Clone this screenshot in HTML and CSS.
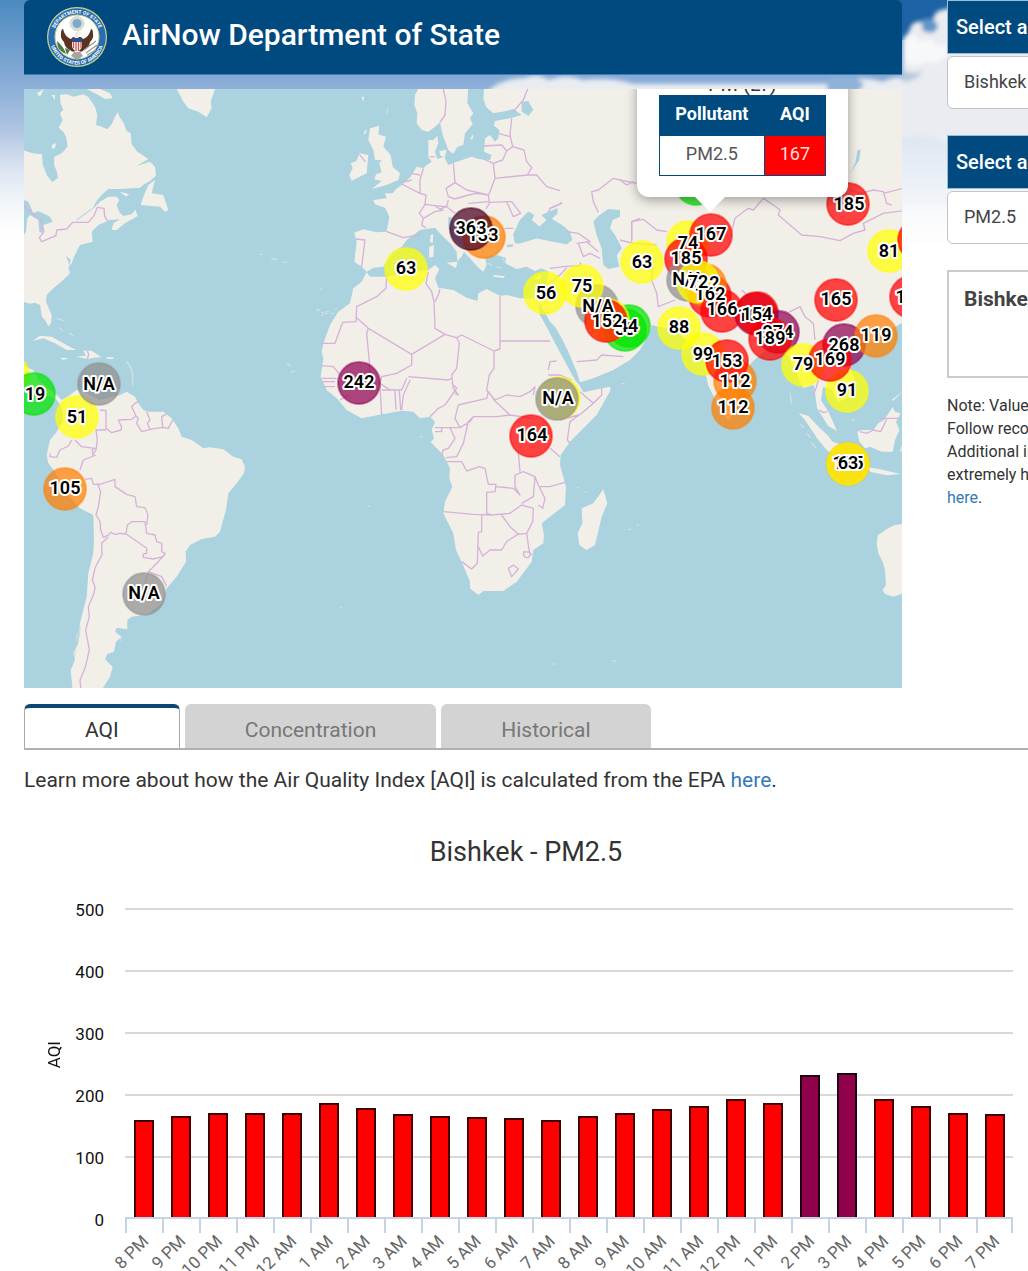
FILE: index.html
```html
<!DOCTYPE html>
<html lang="en">
<head>
<meta charset="utf-8">
<meta name="viewport" content="width=device-width, initial-scale=1">
<title>AirNow Department of State</title>
<link rel="stylesheet" href="styles.css">
</head>
<body>
<div class="page">
  <svg class="sky" viewBox="0 0 1028 260" preserveAspectRatio="none" aria-hidden="true">
    <defs>
      <linearGradient id="skyFill" x1="0" y1="0" x2="0" y2="1">
        <stop offset="0" stop-color="#4a8ac0"/>
        <stop offset=".3" stop-color="#86aad6"/>
        <stop offset=".55" stop-color="#b9cbe4"/>
        <stop offset="1" stop-color="#ffffff"/>
      </linearGradient>
      <linearGradient id="skyFade" x1="0" y1="0" x2="0" y2="1">
        <stop offset=".5" stop-color="#ffffff" stop-opacity="0"/>
        <stop offset=".95" stop-color="#ffffff"/>
      </linearGradient>
      <filter id="soft" x="-10%" y="-10%" width="120%" height="120%"><feGaussianBlur stdDeviation="2"/></filter>
    </defs>
    <rect width="1028" height="260" fill="url(#skyFill)"/>
    <path d="M880 0h148v40H880z" fill="#1d62a4"/>
    <g filter="url(#soft)">
      <path d="M485 94q15-16 40-16q12-6 24 2q16-7 34 0q30-3 50 4h190q40-10 60-2q10-6 20-4V38q6-4 8-12q6-8 14-2q4 6 8-2q0-10 8-12q8-2 12-2q6-8 14-8h120v260H485z" fill="#e9ecf0"/>
      <path d="M922 20q6-4 14 2q4 6-2 10q-10 2-12-4z" fill="#5f97c8"/>
      <path d="M904 40q10-12 16 2q10-8 18 4q8-4 12 6q-10 14-24 10q-12 8-22-2z" fill="#f7f8f9"/>
      <path d="M902 70q14 6 20 0q-2 10-20 12z" fill="#b9c8dc"/>
      <path d="M826 82q10-8 20-4q10-2 18 6l-6 8h-30z" fill="#8fb2d8"/>
      <path d="M895 140q30-10 60 6v60h-60z" fill="#dce5f1"/>
    </g>
    <rect width="1028" height="260" fill="url(#skyFade)"/>
  </svg>

  <div class="top">
    <main class="lead">
      <header class="banner">
        <svg class="seal" viewBox="0 0 62 62" role="img" aria-label="Department of State seal">
          <defs>
            <path id="arcTop" d="M7.500 31a23.500 23.500 0 0 1 47 0"/>
            <path id="arcBottom" d="M3.500 31a27.500 27.500 0 0 0 55 0"/>
          </defs>
          <circle cx="31" cy="31" r="30" fill="#c9d68a"/>
          <circle cx="31" cy="31" r="28.800" fill="#2a6cb4"/>
          <circle cx="31" cy="31" r="22" fill="#fff" stroke="#c9d68a"/>
          <g class="seal-text">
            <text><textPath href="#arcTop" startOffset="50%">DEPARTMENT OF STATE</textPath></text>
            <text><textPath href="#arcBottom" startOffset="50%">UNITED STATES OF AMERICA</textPath></text>
          </g>
          <circle cx="31" cy="17.500" r="7" fill="#cfe0ea" stroke="#e4cf7c" stroke-dasharray="2 1"/>
          <circle cx="31" cy="17.500" r="4.500" fill="#7fa8c9"/>
          <path d="M17 23q-2 0-2 5q-1 4 3 8q1 6 6 8q3 3 5 1l1-8h2l1 8q2 2 5-1q5-2 6-8q4-4 3-8q0-5-2-5q-2 8-8 10l-2-2h-8l-2 2q-6-2-8-10z" fill="#5b3320"/>
          <path d="M29 29q0-4 3-4q3 1 3 3l-3 1l1 5h-5z" fill="#f1ede0"/>
          <path d="M26 32h10v9q-2 4-5 5q-3-1-5-5z" fill="#f3f1f1"/>
          <path d="M26 32h10v4H26z" fill="#2c4e91"/>
          <path d="M27.500 36v6M30 36v9M32.500 36v9M35 36v6" stroke="#d0524c" stroke-width="1.200"/>
          <path d="M28 46h6l3 4l-6 4l-6-4z" fill="#a9a39d"/>
          <path d="M11 35q7 6 9 13q-9-3-9-13zM19 42l5 2l-3 5z" fill="#4c7b45"/>
          <path d="M38 44l12-9M40 47l11-8M41 49l9-5" stroke="#9b9c96" stroke-width="1.300"/>
        </svg>
        <h1>AirNow Department of State</h1>
      </header>

      <section class="map" aria-label="Air quality map">
        <svg class="map-art" viewBox="24 89 878 599">
          <rect class="sea" x="24" y="89" width="878" height="599"/>

          <!-- North America and the Caribbean -->
          <g transform="translate(20 85) scale(.33333)">
            <path class="land" d="M0 193L38 205L66 208L68 240L76 255L82 272L97 292L114 278L110 258L102 240L103 215L125 205L143 185L139 158L130 140L116 128L128 105L120 85L130 75L122 55L120 30L140 27L160 35L190 28L205 36L225 65L232 90L228 120L245 125L262 133L275 118L285 95L293 82L300 98L310 112L320 138L332 145L335 178L352 200L385 222L350 243L390 230L405 245L408 272L390 288L372 298L360 308L300 312L265 312L245 330L228 350L215 375L240 350L265 335L290 335L298 345L290 360L298 382L310 393L335 388L346 374L353 393L315 415L290 435L275 435L280 415L300 403L270 405L235 420L215 440L218 470L200 475L180 480L162 515L155 535L145 548L150 565L130 585L100 610L80 630L78 650L95 690L93 715L85 724L75 705L66 695L60 660L45 653L30 656L0 648z"/>
            <path class="land" d="M405 285L395 325L430 330L445 375L436 381L420 365L362 360L372 330L385 300zM470 12L490 50L505 70L535 80L560 97L575 70L572 50L585 12zM200 12L235 30L255 42L278 40L270 25L240 12zM50 25L72 12L60 35zM95 30h10v16zM95 180l14-6l-4 14l-8 5zM300 320l28 8l-10 7zM38 768L60 752L95 755L130 775L168 795L140 795L105 775L70 760zM190 797L215 797L245 817L222 818L205 822L168 815L198 812zM120 818L145 820L130 826zM260 817h20v5h-20z"/>
            <path class="water" d="M0 340L25 350L40 385L55 378L90 395L98 410L70 420L68 445L58 440L55 405L30 390L22 400L18 440L0 470z"/>
            <path class="water" d="M138 512l14 12l-4 20l-3-14zM68 240l8 14l10-10l-3 18l10 15l-12-6z"/>
            <path class="line" d="M0 355L30 378L62 405L72 440L58 458L65 470L108 452L110 435L140 432L158 412L205 412L222 392L232 367L252 370L254 395L265 410M202 798l4 10l-4 14"/>
            <path class="line pale" d="M170 405L215 372"/>
            <path class="speck" d="M112 700l20 8M120 730l8 8M150 745l10 8M720 508h6M755 522h16M790 532h8M900 613h6M890 675h8M905 682h5M915 685h6M935 685h6M945 672h5M320 830l12 16l6 20M800 835l10 8M812 862l12-4"/>
          </g>

          <!-- South America -->
          <g transform="translate(20 340) scale(.33333)">
            <path class="land" d="M0 75L40 90L55 120L110 165L125 180L150 165L170 150L190 155L240 180L300 165L320 155L345 170L355 190L370 210L385 215L430 215L455 235L475 265L485 290L515 300L550 325L570 322L610 328L640 350L665 358L675 380L672 400L650 430L625 460L618 510L608 545L600 575L585 590L545 597L510 615L497 635L498 665L470 710L440 745L425 790L380 825L335 830L322 840L322 868L290 863L285 875L305 890L288 905L282 935L262 942L255 958L278 980L270 1010L245 1050L158 1050L152 990L165 960L160 940L175 910L180 850L190 810L200 770L205 700L220 640L222 600L220 525L180 505L130 450L105 395L85 370L80 345L90 300L110 275L130 240L125 200L108 178L50 150L0 140z"/>
            <path class="line" d="M265 590L245 610L246 645L232 670L225 685L217 720L225 740L222 760L205 800L208 830L197 870L208 930L195 985L180 1020L183 1050M232 430L242 455L235 500L228 525L240 545L242 570L250 592L265 585L272 577L285 583L300 580L318 582L322 555L335 545L375 545L380 580L405 585L410 605L425 610L425 635L435 640L430 650L400 657L370 652L370 642L380 640L380 625L345 600L318 582M195 418L215 415L220 433L240 433L285 418L285 440L320 463L345 470L350 500L375 503L384 525L380 555M430 648L415 665L385 695L375 730M385 695L425 710L440 738"/>
            <path class="line" d="M240 210L258 212L258 265L275 278L303 270L305 262L295 240L335 238L348 228L335 200L345 190L355 185M345 225L355 235L350 250L365 275L405 265L430 262L445 265L458 240M380 215L390 240L382 250L390 268M440 222L425 230L428 262M258 270L228 270L232 300L228 330L218 345L217 330L225 325L185 320L165 300M155 300L145 318L120 330L110 352L90 350L90 340M228 345L190 360L180 390"/>
            <path class="speck" d="M172 880l-3 22M166 930l-2 20M180 860l-2 30M300 895l3 6M325 70l12 25l2 40"/>
          </g>

          <!-- Europe, Africa and Arabia -->
          <g transform="translate(320 85) scale(.33333)">
            <path class="land" d="M300 0L285 30L283 60L292 85L290 115L305 135L325 140L345 125L360 112L368 150L385 195L400 207L412 185L430 180L435 145L458 118L450 100L460 85L442 55L445 0z"/>
            <path class="land" d="M493 0L490 40L498 65L520 85L560 78L580 72L605 90L570 100L525 108L522 122L538 135L535 160L525 170L510 150L495 160L492 200L515 210L510 225L475 222L455 215L410 230L385 240L372 215L352 222L345 200L355 175L352 152L340 165L325 165L325 215L335 230L320 240L310 250L290 245L272 275L245 300L228 312L218 325L195 325L200 340L160 345L165 358L195 368L208 395L200 440L170 442L130 433L103 443L110 470L103 530L125 545L140 560L160 548L190 545L220 500L245 485L260 465L300 435L345 428L360 445L395 480L410 500L412 528L425 515L432 500L450 520L475 548L490 560L500 540L495 520L530 510L558 518L556 535L570 542L590 552L620 545L645 558L665 550L685 560L680 600L675 620L665 665L690 710L705 725L725 760L745 800L770 860L780 892L820 880L880 855L930 825L960 795L990 740L1000 700L1100 700L1100 0z"/>
            <path class="land" d="M675 625L650 640L600 640L560 630L540 632L500 612L475 625L472 648L440 638L400 615L355 608L345 580L358 552L345 540L325 555L250 565L200 575L150 575L140 562L125 590L100 610L90 655L55 680L30 720L12 770L5 800L10 820L2 875L20 915L50 940L80 975L125 1000L175 990L245 977L280 980L300 1000L330 995L345 1010L335 1035L342 1060L332 1072L370 1110L390 1150L388 1180L397 1205L375 1250L370 1285L400 1345L408 1395L425 1430L450 1490L450 1510L475 1530L490 1518L550 1518L590 1490L635 1430L640 1395L670 1375L672 1350L665 1315L735 1260L738 1205L720 1140L722 1110L750 1070L830 990L872 915L870 905L790 922L778 900L765 885L735 830L700 765L685 735L660 690L655 662L670 655z"/>
            <path class="land" d="M850 1213L862 1255L845 1295L825 1380L800 1395L778 1380L773 1345L787 1315L785 1270L820 1255z"/>
            <path class="land" d="M150 130L178 122L175 148L198 155L190 185L212 210L218 245L240 265L235 285L200 300L155 312L185 288L163 283L168 268L185 262L178 235L185 225L165 225L160 195L145 165zM118 205L145 210L140 265L95 287L88 270L98 250L92 235L110 228zM332 450L340 448L338 475L330 470zM327 487L342 480L340 515L328 518zM380 533L412 530L408 550zM520 570l35 4l-4 5l-30-4zM638 582l28-16l-8 18zM358 198l22-4l-6 24l-14-8zM450 165l8-18l2 12zM124 35h8l-2 16zM130 150l6-18l4 10z"/>
            <path class="water" d="M580 448L600 405L625 380L642 390L635 405L658 425L680 405L665 390L712 370L712 385L695 402L725 420L750 440L757 465L740 478L690 468L650 460L600 475L585 475z"/>
            <path class="water" d="M820 410L835 393L865 372L900 375L900 395L878 405L870 430L885 450L905 490L890 510L897 545L865 552L850 540L845 490L830 450zM605 50L625 48L640 75L625 92L605 80zM560 480l20-3l-2 8l-16 2z"/>
            <path class="water" d="M385 395L400 400L402 440L445 480L450 500L432 490L400 460L385 430z"/>
            <path class="line" d="M370 12L378 50L375 90L360 112M623 12L610 45L580 80M575 100L570 150L578 185M535 145L570 155M490 183L545 180L560 198L578 185L612 195L620 230L635 248L622 270M560 198L548 225L520 235L490 222M520 235L525 280L622 270L650 270L680 305L730 320L725 355L690 370L682 390M525 280L510 320L505 330L440 315L405 293L400 235M405 293L378 310L385 335L405 342L445 330L470 325L505 330L508 350L445 355M310 250L300 285L300 325L318 330L315 358L345 362L380 365L385 345M245 297L300 325M245 292L275 285M300 270L275 265M315 358L298 385L310 400L345 380L370 375M310 400L305 420L318 430M200 440L250 458L300 450M108 462L135 465L125 545M510 352L560 350L580 395L602 385L575 350L560 350M510 352L498 372M555 430L580 430M345 362L360 372L380 365L405 385M740 440L775 445L810 470L770 475M775 475L790 515L810 505L840 520M800 470L835 500M690 550L730 545L780 542L785 515M680 600L720 570L740 548M950 295L900 285L880 280L835 315L815 320L820 350L835 382M935 470L935 410L960 400M330 215h14M118 208l18 22"/>
            <path class="line" d="M200 575L198 610L170 635L110 665L108 710L68 712L45 775L5 775M110 698L145 730L275 808L375 748L345 730L342 650L335 620L318 595L325 560M345 650L355 630L360 612M375 748L410 758L425 750L522 798L540 792L540 632M540 768L690 768M522 798L522 850L508 870L500 915L525 945M410 758L418 775L410 850L395 870L400 910L415 930L405 925M275 808L275 840L230 865L185 875L180 895L210 915M145 730L140 745L155 905M5 842L40 845L60 870M5 880h45M5 890h40M10 905L45 905M60 945L85 930M180 900L185 990M265 875L385 885L395 880M185 915L245 915L260 880M225 918L228 975M238 915L242 975M245 975L250 930L270 885M395 895L410 910L375 960L355 970L330 995M415 960L405 1000L420 1028L450 1010L460 995L530 995L570 990L525 948L505 920L500 940L415 960M345 1028L420 1028M345 1040h20v-12M390 1028L405 1060L385 1090L370 1095L365 1110M378 1118L410 1115L430 1075L445 1010L460 995M380 1130L425 1130L440 1158L478 1145L495 1150L505 1198L528 1198L525 1220L500 1222L500 1285L515 1290M370 1280L460 1288L515 1290L570 1285L605 1260L640 1270L638 1310L620 1345L595 1348L570 1325L545 1290M528 1205L580 1210L600 1230L585 1205L585 1170L610 1160L645 1175L640 1235L605 1255M485 1290L485 1340L475 1342L472 1435L455 1452L425 1430M475 1385L488 1413L510 1395L545 1395L560 1370L598 1345M620 1345L628 1400L635 1410M612 1400a10 12 0 1 0 18 2zM565 1450L580 1440L595 1452L575 1475zM600 1160L595 1100M690 1090L720 1115M660 1205L690 1205L735 1192M645 1175L655 1200L675 1240L668 1270L655 1260M525 945L560 930L600 935L630 920L645 905L640 930M570 990L640 1000M685 855L690 830L710 828M685 870L720 870L755 885M780 920L820 955L785 985L750 1010L742 1065L750 1075M820 955L845 930L845 910M770 830L830 825L845 810L910 815M660 690L690 680M720 1005L775 990"/>
            <path class="speck" d="M5 690h5M20 680h6M145 1263h3M300 1055h6M905 896h8M772 1207h4M795 1220h4M925 1333h8M952 1320h4M60 1567h5M700 1737h5M880 1728h6M485 490l8 10M505 535l10 5M530 545l12 4M548 520l6 8M200 85l4-14"/>
          </g>

          <!-- Asia and Oceania -->
          <path class="land" d="M560 89H902V323L885 332L870 342L855 341L843 350L850 368L856 383L850 397L838 402L832 390L823 387L821 400L829 413L837 431L828 426L817 408L814 385L803 388L794 368L785 350L768 348L752 362L738 383L736 410L728 421L718 405L708 385L702 355L688 342L676 330L655 326L632 318L612 300L603 270L580 262L560 230L580 228L600 238L603 262L620 268L626 240L600 240L580 210L560 205z" fill-rule="nonzero"/>
          <g transform="translate(320 85) scale(.33333)">
            <path class="water" d="M580 448L600 405L625 380L642 390L635 405L658 425L680 405L665 390L712 370L712 385L695 402L725 420L750 440L757 465L740 478L690 468L650 460L600 475L585 475z"/>
            <path class="water" d="M820 410L835 393L865 372L900 375L900 395L878 405L870 430L885 450L905 490L890 510L897 545L865 552L850 540L845 490L830 450z"/>
            <path class="line" d="M740 440L775 445L810 470L770 475M775 475L790 515L810 505L840 520M800 470L835 500M720 352L725 355L690 370M950 295L900 285L880 280L835 315L815 320L820 350L835 382M935 470L935 410L960 400"/>
          </g>
          <g transform="translate(740 380) scale(.33333)">
            <path class="land" d="M486 432L465 435L440 447L425 458L414 465L410 490L415 520L428 545L435 570L438 615L428 630L435 642L460 650L490 640zM176 99L205 108L240 145L262 165L278 185L298 192L300 215L265 215L235 180L215 150L195 120zM352 155L365 150L400 150L415 130L432 120L458 82L465 95L482 100L468 125L478 150L465 180L458 215L425 215L390 200L375 205L358 185zM385 262L420 268L482 282L440 286L390 275zM480 215L490 180V210z"/>
            <path class="land" d="M455 60L490 32L460 62z"/>
            <path class="line" d="M235 0L228 25L218 50M238 90L250 98L262 95M360 155L380 160L400 150L422 155L440 118M420 115L480 115"/>
            <path class="speck" d="M182 135l10 8M200 160l10 12M215 190l12 12M150 40l5 30M335 118l8 4"/>
          </g>
          <g transform="translate(620 80) scale(.33333)">
            <path class="water" d="M722 208L718 240L692 278L706 248L712 212z"/>
            <path class="line" d="M0 300L20 315L40 305M0 480L40 490L110 495M35 480L35 425L70 418L110 450L140 455M335 455L345 415L385 385L400 390L430 355L460 375L480 390L475 405L545 465L600 470L660 482L700 460L735 450L730 430L790 400L850 392M690 330L720 340L760 330L790 335L800 370L815 375M790 340L850 325M100 560L95 600L110 640L115 680L165 660M365 630L420 680L500 695M500 700L540 680L555 710L580 730L585 780"/>
          </g>

          <!-- Monitoring stations -->
          <g class="stations">
            <circle class="good" cx="696" cy="184" r="21"/>
            <circle class="moderate" cx="8" cy="375" r="21"/>
            <circle class="good" cx="34" cy="394" r="21"/>
            <circle class="moderate" cx="77" cy="417" r="21"/>
            <circle class="none" cx="99" cy="384" r="21"/>
            <circle class="sensitive" cx="65" cy="489" r="21"/>
            <circle class="none" cx="144" cy="594" r="21"/>
            <circle class="very" cx="359" cy="383" r="21"/>
            <circle class="moderate" cx="406" cy="269" r="21"/>
            <circle class="sensitive" cx="484" cy="237" r="21"/>
            <circle class="hazardous" cx="471" cy="229" r="21"/>
            <circle class="none" cx="597" cy="306" r="21"/>
            <circle class="moderate" cx="545" cy="293" r="21"/>
            <circle class="moderate" cx="582" cy="286" r="21"/>
            <circle class="good" cx="629" cy="326" r="21"/>
            <circle class="good" cx="625" cy="330" r="21"/>
            <circle class="moderate" cx="608" cy="320" r="21"/>
            <circle class="unhealthy" cx="606" cy="321" r="21"/>
            <circle class="moderate" cx="642" cy="262" r="21"/>
            <circle class="moderate" cx="559" cy="398" r="21"/>
            <circle class="none" cx="557" cy="399" r="21"/>
            <circle class="unhealthy" cx="531" cy="436" r="21"/>
            <circle class="moderate" cx="688" cy="242" r="21"/>
            <circle class="unhealthy" cx="711" cy="235" r="21"/>
            <circle class="unhealthy" cx="686" cy="259" r="21"/>
            <circle class="none" cx="688" cy="280" r="21"/>
            <circle class="unhealthy" cx="710" cy="296" r="21"/>
            <circle class="sensitive" cx="705" cy="285" r="21"/>
            <circle class="moderate" cx="698" cy="282" r="21"/>
            <circle class="unhealthy" cx="722" cy="311" r="21"/>
            <circle class="very" cx="756" cy="314" r="21"/>
            <circle class="unhealthy" cx="757" cy="313" r="21"/>
            <circle class="very" cx="778" cy="332" r="21"/>
            <circle class="unhealthy" cx="770" cy="339" r="21"/>
            <circle class="moderate" cx="679" cy="328" r="21"/>
            <circle class="moderate" cx="703" cy="354" r="21"/>
            <circle class="sensitive" cx="735" cy="381" r="21"/>
            <circle class="unhealthy" cx="727" cy="361" r="21"/>
            <circle class="sensitive" cx="733" cy="408" r="21"/>
            <circle class="moderate" cx="803" cy="365" r="21"/>
            <circle class="moderate" cx="847" cy="391" r="21"/>
            <circle class="very" cx="844" cy="345" r="21"/>
            <circle class="unhealthy" cx="830" cy="360" r="21"/>
            <circle class="sensitive" cx="876" cy="336" r="21"/>
            <circle class="unhealthy" cx="836" cy="300" r="21"/>
            <circle class="unhealthy" cx="848" cy="204" r="21"/>
            <circle class="moderate" cx="889" cy="251" r="21"/>
            <circle class="unhealthy" cx="919" cy="240" r="21"/>
            <circle class="unhealthy" cx="911" cy="297" r="21"/>
            <circle class="sensitive" cx="848" cy="464" r="21"/>
            <circle class="moderate" cx="848" cy="464" r="21"/>
          </g>
          <g class="readings">
            <text x="35" y="400">19</text>
            <text x="77" y="423">51</text>
            <text x="99" y="390">N/A</text>
            <text x="65" y="494">105</text>
            <text x="144" y="599">N/A</text>
            <text x="359" y="388">242</text>
            <text x="406" y="274">63</text>
            <text x="483" y="241">133</text>
            <text x="471" y="234">363</text>
            <text x="546" y="299">56</text>
            <text x="582" y="292">75</text>
            <text x="598" y="312">N/A</text>
            <text x="625" y="335">53</text>
            <text x="628" y="332">44</text>
            <text x="607" y="327">152</text>
            <text x="642" y="268">63</text>
            <text x="558" y="404">N/A</text>
            <text x="532" y="441">164</text>
            <text x="688" y="249">74</text>
            <text x="711" y="240">167</text>
            <text x="686" y="264">185</text>
            <text x="688" y="285">N/A</text>
            <text x="704" y="289">122</text>
            <text x="710" y="300">162</text>
            <text x="698" y="288">72</text>
            <text x="722" y="315">166</text>
            <text x="753" y="321">161</text>
            <text x="757" y="320">154</text>
            <text x="778" y="338">274</text>
            <text x="770" y="344">189</text>
            <text x="679" y="333">88</text>
            <text x="703" y="360">99</text>
            <text x="727" y="367">153</text>
            <text x="735" y="387">112</text>
            <text x="733" y="413">112</text>
            <text x="803" y="370">79</text>
            <text x="844" y="351">268</text>
            <text x="830" y="365">169</text>
            <text x="847" y="396">91</text>
            <text x="876" y="341">119</text>
            <text x="836" y="305">165</text>
            <text x="849" y="210">185</text>
            <text x="889" y="257">81</text>
            <text x="911" y="303">156</text>
            <text x="848" y="469">125</text>
            <text x="848" y="469">63</text>
          </g>
        </svg>

        <div class="popup">
          <p class="popup-time">PM (LT)</p>
          <table class="popup-table">
            <thead><tr><th scope="col">Pollutant</th><th scope="col">AQI</th></tr></thead>
            <tbody><tr><td>PM2.5</td><td class="aqi">167</td></tr></tbody>
          </table>
        </div>
      </section>
    </main>

    <aside class="side">
      <div class="side-inner">
        <div class="field">
          <label for="city">Select a City</label>
          <select id="city"><option>Bishkek</option></select>
        </div>
        <div class="field">
          <label for="pollutant">Select a Pollutant</label>
          <select id="pollutant"><option>PM2.5</option></select>
        </div>
        <section class="current"><h2>Bishkek</h2></section>
        <p class="note">Note: Values above 500<br>Follow recommendations<br>Additional information<br>extremely high levels<br><a href="#exposure">here</a>.</p>
      </div>
    </aside>
  </div>

  <section class="data">
    <div class="tabs" role="tablist">
      <button class="tab active" role="tab" aria-selected="true">AQI</button>
      <button class="tab" role="tab" aria-selected="false">Concentration</button>
      <button class="tab" role="tab" aria-selected="false">Historical</button>
    </div>
    <p class="learn">Learn more about how the Air Quality Index [AQI] is calculated from the EPA <a href="#epa">here</a>.</p>

    <figure class="chart">
      <figcaption>Bishkek - PM2.5</figcaption>
      <div class="chart-body">
        <div class="axis-title"><span>AQI</span></div>
        <div class="scale"><span>500</span><span>400</span><span>300</span><span>200</span><span>100</span><span>0</span></div>
        <div class="plot">
          <div class="bars">
            <i style="height:31.4%"></i><i style="height:32.8%"></i><i style="height:33.8%"></i><i style="height:33.8%"></i><i style="height:33.8%"></i><i style="height:36.8%"></i><i style="height:35.4%"></i><i style="height:33.4%"></i><i style="height:32.8%"></i><i style="height:32.4%"></i><i style="height:32%"></i><i style="height:31.4%"></i><i style="height:32.8%"></i><i style="height:33.8%"></i><i style="height:34.8%"></i><i style="height:35.8%"></i><i style="height:38.2%"></i><i style="height:36.8%"></i><i class="purple" style="height:46%"></i><i class="purple" style="height:46.6%"></i><i style="height:38.2%"></i><i style="height:35.8%"></i><i style="height:33.8%"></i><i style="height:33.4%"></i>
          </div>
          <div class="hours">
            <span><b>8 PM</b></span><span><b>9 PM</b></span><span><b>10 PM</b></span><span><b>11 PM</b></span><span><b>12 AM</b></span><span><b>1 AM</b></span><span><b>2 AM</b></span><span><b>3 AM</b></span><span><b>4 AM</b></span><span><b>5 AM</b></span><span><b>6 AM</b></span><span><b>7 AM</b></span><span><b>8 AM</b></span><span><b>9 AM</b></span><span><b>10 AM</b></span><span><b>11 AM</b></span><span><b>12 PM</b></span><span><b>1 PM</b></span><span><b>2 PM</b></span><span><b>3 PM</b></span><span><b>4 PM</b></span><span><b>5 PM</b></span><span><b>6 PM</b></span><span><b>7 PM</b></span>
          </div>
        </div>
      </div>
    </figure>
  </section>
</div>
</body>
</html>
```
FILE: styles.css
```css
* { box-sizing: border-box; }

body {
  margin: 0;
  background: #fff;
  color: #333;
  font-family: Roboto, "Liberation Sans", sans-serif;
}

h1, h2, p, figure { margin: 0; }
a { color: #337ab7; text-decoration: none; }

.page {
  position: relative;
  overflow: hidden;
  padding-left: 24px;
}

.sky {
  position: absolute;
  top: 0;
  left: 0;
  width: 100%;
  height: 260px;
}

/* Banner, map and side column */
.top {
  position: relative;
  display: grid;
  grid-template-columns: minmax(0, 1fr) 81px;
  column-gap: 45px;
}

.banner {
  display: flex;
  align-items: center;
  gap: 14px;
  height: 75px;
  padding: 0 22px;
  background: #004a80;
  border-bottom: 1px solid #3d7db3;
  border-radius: 6px 6px 0 0;
}

.seal { width: 62px; height: 62px; }
.seal-text text {
  font-size: 5px;
  font-weight: 700;
  fill: #fff;
  text-anchor: middle;
}

.banner h1 {
  color: #fff;
  font-size: 30px;
  font-weight: 500;
  line-height: 36px;
  padding-bottom: 4px;
}

.map {
  position: relative;
  margin-top: 14px;
  overflow: hidden;
}
.map-art { display: block; width: 100%; height: auto; }

.sea, .water { fill: #aad3df; }
.land { fill: #f2efe9; }
.line {
  fill: none;
  stroke: #d6b2d8;
  stroke-width: 4;
  stroke-linejoin: round;
}
.line.pale { stroke: #bcd9df; }
.speck {
  fill: none;
  stroke: #cfe0e2;
  stroke-width: 4;
  stroke-linecap: round;
}

.stations circle {
  fill-opacity: .72;
  stroke-opacity: .5;
  stroke-width: 2;
}
.good { fill: #00e400; stroke: #00e400; }
.moderate { fill: #ffff00; stroke: #ffff00; }
.sensitive { fill: #ff7e00; stroke: #ff7e00; }
.unhealthy { fill: #ff0000; stroke: #ff0000; }
.very { fill: #8f0052; stroke: #8f0052; }
.hazardous { fill: #4a0022; stroke: #4a0022; }
.none { fill: #8f8f8f; stroke: #8f8f8f; }

.readings text {
  font-size: 18px;
  font-weight: 600;
  text-anchor: middle;
  fill: #000;
  stroke: #fff;
  stroke-width: 4px;
  stroke-linejoin: round;
  paint-order: stroke;
}

.popup {
  position: absolute;
  left: 69.8%;
  bottom: 82%;
  width: 211px;
  padding: 0 22px 21px;
  background: #fff;
  border-radius: 12px;
  box-shadow: 0 3px 12px rgba(0, 0, 0, .35);
}
.popup::after {
  content: "";
  position: absolute;
  top: 100%;
  left: 58px;
  border: 15px solid transparent;
  border-top-color: #fff;
  border-bottom: 0;
}
.popup-time {
  font-size: 20px;
  line-height: 22px;
  text-align: center;
}
.popup-table {
  width: 100%;
  border-collapse: collapse;
  font-size: 18px;
  line-height: 20px;
  text-align: center;
  color: #555;
}
.popup-table th,
.popup-table td {
  height: 40px;
  padding: 0 0 2px;
  border: 1px solid #004a80;
}
.popup-table th {
  background: #004a80;
  color: #fff;
  font-weight: 700;
}
.popup-table th:first-child { width: 105px; }
.popup-table .aqi { background: #f00; color: #fdd; }

/* Side column, wider than its track so that it runs past the window's edge */
.side-inner { width: 300px; }
.field { margin-bottom: 26px; }
.field label {
  display: block;
  padding: 0 8px;
  background: #004a80;
  border: 1px solid #9dbcd6;
  color: #fff;
  font-size: 20px;
  font-weight: 500;
  line-height: 52px;
}
.field select {
  display: block;
  width: 100%;
  height: 53px;
  margin-top: 2px;
  padding: 0 16px 2px;
  appearance: none;
  background: #fff;
  border: 1px solid #c4c4c4;
  border-radius: 6px;
  color: #444;
  font: 400 18px Roboto, "Liberation Sans", sans-serif;
}
.current {
  height: 108px;
  padding: 16px 15px;
  background: #fff;
  border: 2px solid #ccc;
}
.current h2 {
  color: #444;
  font-size: 21px;
  font-weight: 700;
  line-height: 22px;
}
.note {
  margin-top: 16px;
  font-size: 16px;
  line-height: 23px;
}

/* Tabs */
.data { position: relative; }
.tabs {
  display: flex;
  gap: 5px;
  margin-top: 16px;
  border-bottom: 2px solid #b0b0b0;
}
.tab {
  height: 44px;
  padding: 8px 60px 0;
  background: #d3d3d3;
  border: 0;
  border-radius: 6px 6px 0 0;
  color: #777;
  font: 400 21px Roboto, "Liberation Sans", sans-serif;
}
.tab.active {
  padding-top: 4px;
  background: #fff;
  border: 1px solid #aaa;
  border-top: 4px solid #0b4775;
  border-bottom: 0;
  color: #333;
}
.learn {
  margin-top: 16px;
  font-size: 21px;
  line-height: 28px;
}

/* Chart */
.chart { margin-top: 40px; }
.chart figcaption {
  font-size: 27px;
  line-height: 36px;
  text-align: center;
}
.chart-body {
  display: grid;
  grid-template-columns: 40px 40px minmax(0, 1fr);
  padding-right: 15px;
  margin-top: 38px;
  color: #111;
  font-size: 17px;
}
.axis-title {
  display: flex;
  align-items: center;
  justify-content: flex-end;
  height: 294px;
}
.axis-title span {
  writing-mode: vertical-rl;
  transform: rotate(180deg);
}
.scale {
  display: flex;
  flex-direction: column;
  justify-content: space-between;
  height: 330px;
  margin-top: -8px;
  line-height: 20px;
  text-align: right;
}
.plot { margin-left: 21px; }
.bars {
  display: grid;
  grid-template-columns: repeat(24, minmax(0, 1fr));
  align-items: end;
  justify-items: center;
  height: 311px;
  background: repeating-linear-gradient(#d8d8d8 0 2px, transparent 2px 62px);
  border-bottom: 2px solid #c6d3e2;
}
.bars i {
  width: 20px;
  background: #f00;
  border: 2px solid #400;
  border-bottom: 0;
}
.bars .purple { background: #90004b; border-color: #200010; }
.hours {
  display: grid;
  grid-template-columns: repeat(24, minmax(0, 1fr));
  height: 52px;
  overflow-x: visible;
  overflow-y: clip;
  background: linear-gradient(#c6d3e2, #c6d3e2) 100% 0 / 2px 14px no-repeat;
}
.hours span {
  display: flex;
  justify-content: flex-end;
  padding: 9px 17px 0 0;
  background: linear-gradient(#c6d3e2, #c6d3e2) 0 0 / 2px 14px no-repeat;
}
.hours b {
  height: 20px;
  color: #666;
  font-size: 17px;
  font-weight: 400;
  line-height: 20px;
  white-space: nowrap;
  transform: rotate(-45deg);
  transform-origin: 100% 50%;
}
```
